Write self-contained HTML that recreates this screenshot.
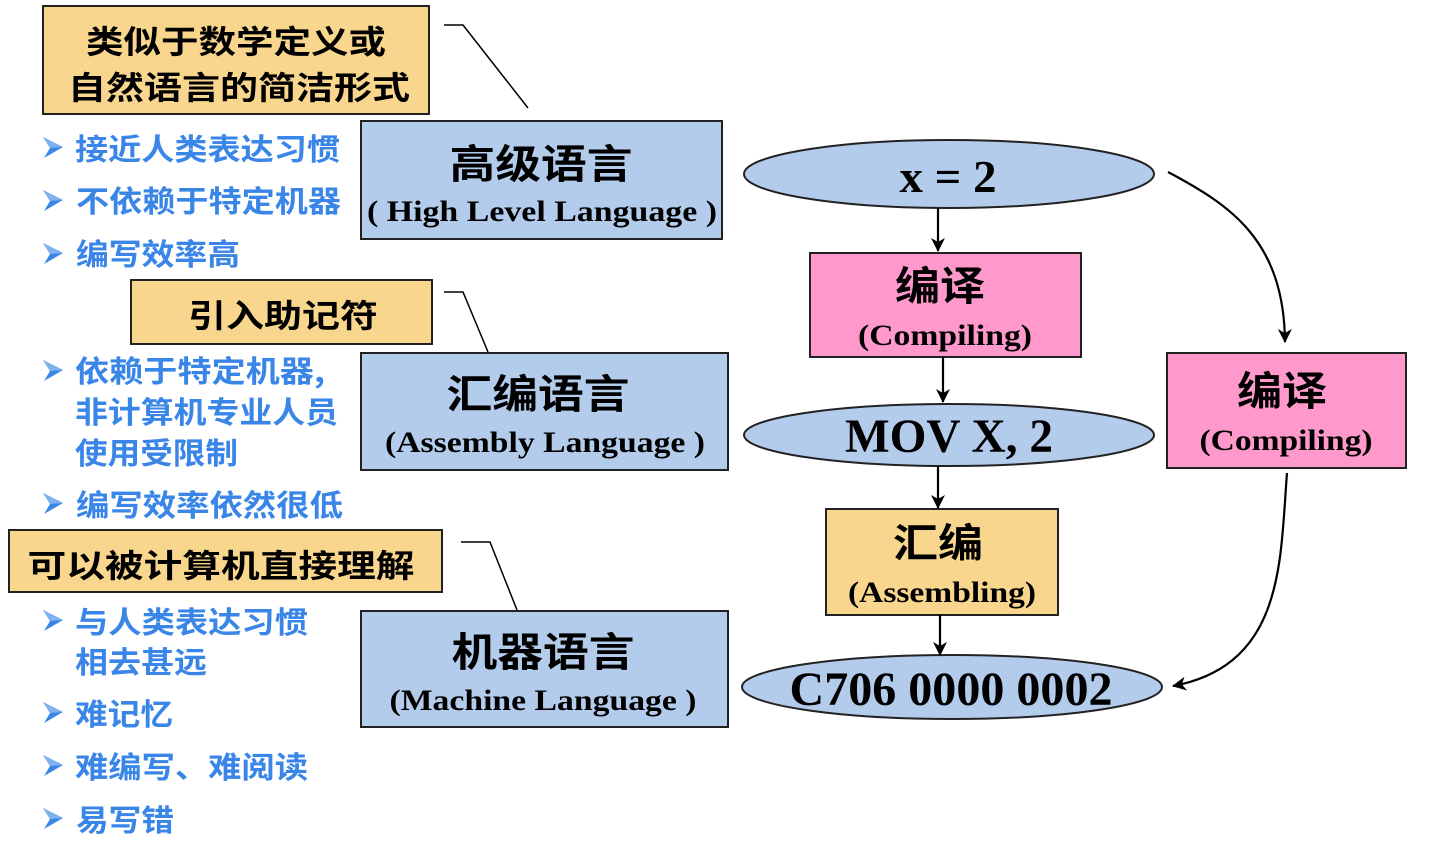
<!DOCTYPE html>
<html><head><meta charset="utf-8"><style>
html,body{margin:0;padding:0;background:#fff;width:1440px;height:856px;overflow:hidden}
svg text{font-family:"Liberation Serif","Noto Serif CJK SC",serif}
.cn{font-family:"Noto Sans CJK SC","WenQuanYi Zen Hei",sans-serif;font-weight:bold}
.bl{fill:#3A86E8}
.b{font-weight:bold}
</style></head><body>
<svg width="1440" height="856" viewBox="0 0 1440 856" xmlns="http://www.w3.org/2000/svg">
<defs>
<marker id="ah" markerWidth="14" markerHeight="14" refX="13" refY="7" orient="auto" markerUnits="userSpaceOnUse" viewBox="0 0 14 14">
<path d="M0,0 L14,7 L0,14 L4,7 Z" fill="#000"/></marker>
<g id="bul"><polygon points="0,0 20,10 1,21 7,11" fill="#3A86E8"/><polygon points="0,0 20,10 7,11" fill="#7FB0F0"/></g>
</defs>
<g stroke="#222" stroke-width="2">
<rect x="43" y="6" width="386" height="108" fill="#F9D68D"/>
<rect x="361" y="121" width="361" height="118" fill="#B4CCEC"/>
<rect x="131" y="280" width="301" height="64" fill="#F9D68D"/>
<rect x="361" y="353" width="367" height="117" fill="#B4CCEC"/>
<rect x="9" y="530" width="433" height="62" fill="#F9D68D"/>
<rect x="361" y="611" width="367" height="116" fill="#B4CCEC"/>
<ellipse cx="949" cy="174" rx="205" ry="34" fill="#B4CCEC"/>
<rect x="810" y="253" width="271" height="104" fill="#FF99CC"/>
<ellipse cx="949" cy="435" rx="205" ry="31" fill="#B4CCEC"/>
<rect x="826" y="509" width="232" height="106" fill="#F9D68D"/>
<ellipse cx="952" cy="687" rx="210" ry="32" fill="#B4CCEC"/>
<rect x="1167" y="353" width="239" height="115" fill="#FF99CC"/>
</g>
<g stroke="#000" stroke-width="1.5" fill="none">
<polyline points="444,25 463,25 528,108"/>
<polyline points="444,292 463,292 488,352"/>
<polyline points="461,542 490,542 517,610"/>
</g>
<g stroke="#000" stroke-width="2.2" fill="none" marker-end="url(#ah)">
<line x1="938" y1="208" x2="938" y2="251"/>
<line x1="943" y1="357" x2="943" y2="402"/>
<line x1="938" y1="466" x2="938" y2="508"/>
<line x1="940" y1="615" x2="940" y2="655"/>
<path d="M1168,172 C1230,205 1284,240 1285,342"/>
<path d="M1287,473 C1280,560 1285,665 1173,686"/>
</g>
<g fill="#000">
<text class="cn" x="236" y="53" font-size="32" text-anchor="middle" textLength="300" lengthAdjust="spacingAndGlyphs">类似于数学定义或</text>
<text class="cn" x="239" y="99" font-size="32" text-anchor="middle" textLength="342" lengthAdjust="spacingAndGlyphs">自然语言的简洁形式</text>
<text class="cn" x="541" y="178" font-size="40" text-anchor="middle" textLength="183" lengthAdjust="spacingAndGlyphs">高级语言</text>
<text class="b" x="542" y="221" font-size="30" text-anchor="middle" textLength="350" lengthAdjust="spacingAndGlyphs">( High Level Language )</text>
<text class="cn" x="283" y="327" font-size="32" text-anchor="middle" textLength="190" lengthAdjust="spacingAndGlyphs">引入助记符</text>
<text class="cn" x="538" y="408" font-size="40" text-anchor="middle" textLength="183" lengthAdjust="spacingAndGlyphs">汇编语言</text>
<text class="b" x="545" y="452" font-size="30" text-anchor="middle" textLength="320" lengthAdjust="spacingAndGlyphs">(Assembly Language )</text>
<text class="cn" x="221" y="577" font-size="32" text-anchor="middle" textLength="387" lengthAdjust="spacingAndGlyphs">可以被计算机直接理解</text>
<text class="cn" x="543" y="666" font-size="40" text-anchor="middle" textLength="183" lengthAdjust="spacingAndGlyphs">机器语言</text>
<text class="b" x="543" y="710" font-size="30" text-anchor="middle" textLength="307" lengthAdjust="spacingAndGlyphs">(Machine Language )</text>
<text class="b" x="948" y="192" font-size="46" text-anchor="middle" textLength="97" lengthAdjust="spacingAndGlyphs">x = 2</text>
<text class="cn" x="940" y="300" font-size="40" text-anchor="middle" textLength="90" lengthAdjust="spacingAndGlyphs">编译</text>
<text class="b" x="945" y="345" font-size="30" text-anchor="middle" textLength="174" lengthAdjust="spacingAndGlyphs">(Compiling)</text>
<text class="b" x="949" y="452" font-size="48" text-anchor="middle" textLength="208" lengthAdjust="spacingAndGlyphs">MOV X, 2</text>
<text class="cn" x="938" y="557" font-size="40" text-anchor="middle" textLength="90" lengthAdjust="spacingAndGlyphs">汇编</text>
<text class="b" x="942" y="602" font-size="30" text-anchor="middle" textLength="188" lengthAdjust="spacingAndGlyphs">(Assembling)</text>
<text class="b" x="951" y="705" font-size="48" text-anchor="middle" textLength="323" lengthAdjust="spacingAndGlyphs">C706 0000 0002</text>
<text class="cn" x="1282" y="405" font-size="40" text-anchor="middle" textLength="90" lengthAdjust="spacingAndGlyphs">编译</text>
<text class="b" x="1286" y="450" font-size="30" text-anchor="middle" textLength="173" lengthAdjust="spacingAndGlyphs">(Compiling)</text>
</g>
<use href="#bul" x="43" y="137"/>
<use href="#bul" x="43" y="190"/>
<use href="#bul" x="43" y="243"/>
<use href="#bul" x="43" y="360"/>
<use href="#bul" x="43" y="493"/>
<use href="#bul" x="43" y="610"/>
<use href="#bul" x="43" y="702"/>
<use href="#bul" x="43" y="755"/>
<use href="#bul" x="43" y="808"/>
<g class="bl" font-size="30">
<text class="cn bl" x="75" y="160" textLength="265" lengthAdjust="spacingAndGlyphs">接近人类表达习惯</text>
<text class="cn bl" x="76" y="212" textLength="265" lengthAdjust="spacingAndGlyphs">不依赖于特定机器</text>
<text class="cn bl" x="76" y="265" textLength="164" lengthAdjust="spacingAndGlyphs">编写效率高</text>
<text class="cn bl" x="75" y="382" textLength="250" lengthAdjust="spacingAndGlyphs">依赖于特定机器,</text>
<text class="cn bl" x="75" y="423" textLength="263" lengthAdjust="spacingAndGlyphs">非计算机专业人员</text>
<text class="cn bl" x="75" y="464" textLength="163" lengthAdjust="spacingAndGlyphs">使用受限制</text>
<text class="cn bl" x="76" y="516" textLength="267" lengthAdjust="spacingAndGlyphs">编写效率依然很低</text>
<text class="cn bl" x="75" y="633" textLength="233" lengthAdjust="spacingAndGlyphs">与人类表达习惯</text>
<text class="cn bl" x="75" y="673" textLength="132" lengthAdjust="spacingAndGlyphs">相去甚远</text>
<text class="cn bl" x="75" y="725" textLength="98" lengthAdjust="spacingAndGlyphs">难记忆</text>
<text class="cn bl" x="75" y="778" textLength="233" lengthAdjust="spacingAndGlyphs">难编写、难阅读</text>
<text class="cn bl" x="76" y="831" textLength="98" lengthAdjust="spacingAndGlyphs">易写错</text>
</g>
</svg>
</body></html>
